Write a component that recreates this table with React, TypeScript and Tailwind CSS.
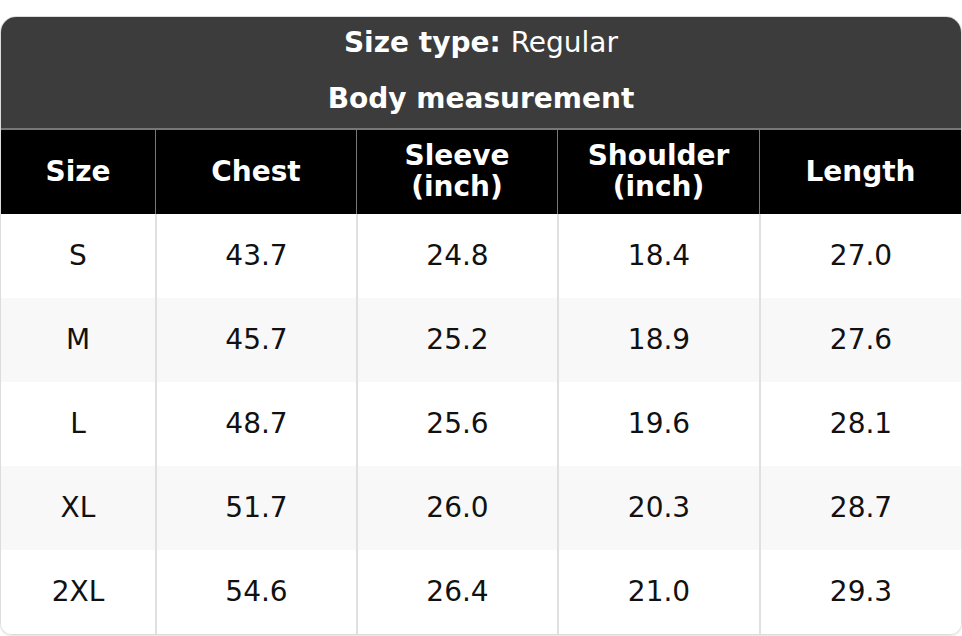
const columns = ['Size', 'Chest', 'Sleeve\n(inch)', 'Shoulder\n(inch)', 'Length']

const rows = [
  ['S', '43.7', '24.8', '18.4', '27.0'],
  ['M', '45.7', '25.2', '18.9', '27.6'],
  ['L', '48.7', '25.6', '19.6', '28.1'],
  ['XL', '51.7', '26.0', '20.3', '28.7'],
  ['2XL', '54.6', '26.4', '21.0', '29.3'],
]

const grid = 'grid grid-cols-[154px_201px_201px_202px_1fr]'

export default function App() {
  return (
    <div
      className="w-[962px] h-[636px] bg-white pt-4"
      style={{ fontFamily: '"DejaVu Sans", "Liberation Sans", sans-serif' }}
    >
      <div className="overflow-hidden rounded-t-2xl rounded-b-xl border border-[#dcdcdc] shadow-[0_1px_2px_rgba(0,0,0,0.12)]">
        <div className="bg-[#3c3c3c] text-white text-[28px] text-center">
          <div className="h-14 flex items-center justify-center pb-1">
            <span className="font-bold">Size type:</span>
            <span className="ml-2.5">Regular</span>
          </div>
          <div className="h-[55px] flex items-center justify-center font-bold pb-1">Body measurement</div>
        </div>
        <div className={`${grid} bg-black text-white border-t-2 border-[#777]`}>
          {columns.map((c, i) => (
            <div
              key={c}
              className={`h-[84px] flex items-center justify-center text-center font-bold text-[28px] leading-[31px] whitespace-pre-line pb-0.5 ${i > 0 ? 'border-l border-[#777]' : ''}`}
            >
              {c}
            </div>
          ))}
        </div>
        {rows.map((r, ri) => (
          <div key={r[0]} className={`${grid} ${ri % 2 === 1 ? 'bg-[#f8f8f8]' : 'bg-white'} text-[#111]`}>
            {r.map((v, i) => (
              <div
                key={i}
                className={`h-[84px] flex items-center justify-center text-[28px] ${i > 0 ? 'border-l-2 border-[#e0e0e0]' : ''}`}
              >
                {v}
              </div>
            ))}
          </div>
        ))}
      </div>
    </div>
  )
}
